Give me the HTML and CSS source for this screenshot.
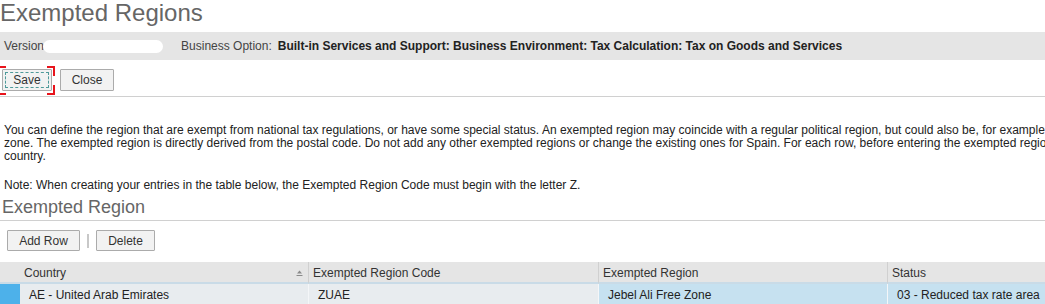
FILE: index.html
```html
<!DOCTYPE html>
<html lang="en">
<head>
<meta charset="utf-8">
<title>Exempted Regions</title>
<link rel="stylesheet" href="styles.css">
</head>
<body>
<div class="page">
  <h1 class="title">Exempted Regions</h1>
  <div class="infobar">
    <span class="lbl">Version</span>
    <span class="blob"></span>
    <span class="lbl opt">Business Option:</span>
    <span class="val">Built-in Services and Support: Business Environment: Tax Calculation: Tax on Goods and Services</span>
  </div>
  <div class="toolbar">
    <span class="focuswrap">
      <button class="btn btn-save">Save</button>
      <span class="corner tl"></span><span class="corner tr"></span><span class="corner bl"></span><span class="corner br"></span>
    </span>
    <button class="btn btn-close">Close</button>
  </div>
  <p class="desc">You can define the region that are exempt from national tax regulations, or have some special status. An exempted region may coincide with a regular political region, but could also be, for example, a free trade<br>zone. The exempted region is directly derived from the postal code. Do not add any other exempted regions or change the existing ones for Spain. For each row, before entering the exempted region, select the<br>country.</p>
  <p class="note">Note: When creating your entries in the table below, the Exempted Region Code must begin with the letter Z.</p>
  <h2 class="section">Exempted Region</h2>
  <div class="tabletools">
    <button class="btn btn-add">Add Row</button>
    <span class="vsep"></span>
    <button class="btn btn-del">Delete</button>
  </div>
  <div class="grid">
    <div class="hcell sel"></div>
    <div class="hcell">Country<svg class="sort" width="7" height="7" viewBox="0 0 7 7"><path d="M3.5 0.5 L6 3.5 L1 3.5 Z" fill="#8a8a8a"/><rect x="0.5" y="5" width="6" height="1" fill="#8a8a8a"/></svg></div>
    <div class="hcell">Exempted Region Code</div>
    <div class="hcell">Exempted Region</div>
    <div class="hcell">Status</div>
    <div class="cell sel"></div>
    <div class="cell ro">AE - United Arab Emirates</div>
    <div class="cell ro">ZUAE</div>
    <div class="cell ed">Jebel Ali Free Zone</div>
    <div class="cell ed">03 - Reduced tax rate area</div>
  </div>
</div>
</body>
</html>
```

FILE: styles.css
```css
html, body {
  margin: 0;
  padding: 0;
  background: #fff;
}
body {
  font-family: "Liberation Sans", Arial, sans-serif;
  font-size: 12px;
  color: #333;
}
.page {
  width: 1045px;
  height: 304px;
  overflow: hidden;
}
.title {
  margin: 0 0 6px 0;
  font-size: 24px;
  line-height: 26px;
  font-weight: normal;
  color: #666;
  white-space: nowrap;
}
.infobar {
  height: 28px;
  background: #e5e5e5;
  display: flex;
  align-items: center;
  padding-left: 4px;
  white-space: nowrap;
}
.lbl {
  color: #444;
}
.blob {
  width: 120px;
  height: 13px;
  background: #fff;
  border-radius: 7px;
  margin-left: -1px;
  filter: blur(0.7px);
}
.opt {
  margin-left: 18px;
}
.val {
  margin-left: 6px;
  font-weight: bold;
  color: #222;
}
.toolbar {
  display: flex;
  align-items: flex-start;
  padding: 9px 0 5px 2px;
  border-bottom: 1px solid #d0d0d0;
}
.btn {
  font-family: "Liberation Sans", Arial, sans-serif;
  font-size: 12px;
  color: #333;
  background: #f2f2f2;
  border: 1px solid #ababab;
  border-radius: 1px;
  height: 22px;
  padding: 0;
  margin: 0;
  display: block;
}
.focuswrap {
  position: relative;
  display: block;
}
.btn-save {
  width: 50px;
  outline: 1px dashed #4f9a9a;
  outline-offset: -4px;
}
.btn-close {
  width: 54px;
  margin-left: 8px;
}
.corner {
  position: absolute;
  width: 6px;
  height: 8px;
  border-color: #e8141c;
  border-style: solid;
  border-width: 0;
}
.corner.tl { left: -4px; top: -3px; border-top-width: 2px; border-left-width: 2px; }
.corner.tr { right: -3px; top: -3px; border-top-width: 2px; border-right-width: 2px; }
.corner.bl { left: -4px; bottom: -4px; border-bottom-width: 2px; border-left-width: 2px; }
.corner.br { right: -3px; bottom: -4px; border-bottom-width: 2px; border-right-width: 2px; }
.desc {
  margin: 27px 0 0 0;
  padding-left: 4px;
  line-height: 13px;
  white-space: nowrap;
  color: #222;
}
.note {
  margin: 16px 0 0 0;
  padding-left: 4px;
  line-height: 13px;
  white-space: nowrap;
  color: #222;
}
.section {
  margin: 4px 0 0 0;
  padding: 0 0 2px 2px;
  font-size: 18px;
  line-height: 22px;
  font-weight: normal;
  color: #666;
  border-bottom: 1px solid #d0d0d0;
}
.tabletools {
  display: flex;
  align-items: center;
  padding: 9px 0 0 7px;
  height: 21px;
}
.tabletools .btn {
  height: 21px;
}
.btn-add {
  width: 73px;
}
.vsep {
  width: 2px;
  height: 14px;
  background: #c8c8c8;
  margin: 0 7px 0 7px;
}
.btn-del {
  width: 59px;
}
.grid {
  margin-top: 11px;
  display: grid;
  grid-template-columns: 20px 289px 290px 289px 300px;
  grid-template-rows: 22px 23px;
  width: 1188px;
}
.hcell {
  background: #e5e5e5;
  border-right: 1px solid #d0d0d0;
  border-bottom: 2px solid #c9dbe7;
  padding-left: 4px;
  line-height: 22px;
  color: #333;
  white-space: nowrap;
  position: relative;
}
.hcell.sel {
  border-right: none;
  padding: 0;
}
.sort {
  position: absolute;
  right: 5px;
  top: 8px;
}
.cell {
  padding-left: 9px;
  line-height: 23px;
  color: #222;
  white-space: nowrap;
  border-right: 1px solid #f4f6f8;
}
.cell.sel {
  background: #4db1ea;
  padding: 0;
  border-right: none;
}
.cell.ro {
  background: #e8ecef;
}
.cell.ed {
  background: #c6e1f0;
}
```
